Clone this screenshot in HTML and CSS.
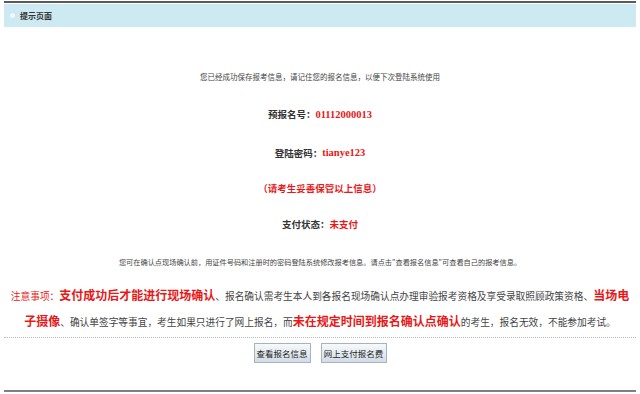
FILE: index.html
```html
<!DOCTYPE html>
<html lang="zh-CN">
<head>
<meta charset="utf-8">
<title>提示页面</title>
<link rel="stylesheet" href="styles.css">
</head>
<body>
<div class="page">
  <div class="topline"></div>
  <div class="header">
    <span class="dot"></span>
    <span class="title">提示页面</span>
  </div>
  <div class="content">
    <div class="row small r1">您已经成功保存报考信息，请记住您的报名信息，以便下次登陆系统使用</div>
    <div class="row big r2">预报名号：<span class="red num">01112000013</span></div>
    <div class="row big r3">登陆密码：<span class="red num">tianye123</span></div>
    <div class="row big red r4">（请考生妥善保管以上信息）</div>
    <div class="row big r5">支付状态：<span class="red">未支付</span></div>
    <div class="row small r6">您可在确认点现场确认前，用证件号码和注册时的密码登陆系统修改报考信息。请点击"查看报名信息"可查看自己的报考信息。</div>
    <div class="notice"><span class="rn">注意事项：</span><b class="rb">支付成功后才能进行现场确认</b>、报名确认需考生本人到各报名现场确认点办理审验报考资格及享受录取照顾政策资格、<b class="rb">当场电</b><br><b class="rb">子摄像</b>、确认单签字等事宜，考生如果只进行了网上报名，而<b class="rb">未在规定时间到报名确认点确认</b>的考生，报名无效，不能参加考试。</div>
    <div class="divider"></div>
    <div class="buttons">
      <button class="btn b1">查看报名信息</button>
      <button class="btn b2">网上支付报名费</button>
    </div>
  </div>
  <div class="bottomline"></div>
</div>
</body>
</html>
```
FILE: styles.css
```css
html, body {
  margin: 0;
  padding: 0;
  background: #ffffff;
}
body {
  font-family: "Noto Sans CJK SC", "Liberation Sans", sans-serif;
  color: #444444;
}
.page {
  margin: 0 4px;
  padding-top: 1px;
}
.topline {
  height: 2px;
  background: #5a5a5a;
}
.header {
  margin-top: 1px;
  height: 23px;
  background: #cdeaf2;
  display: flex;
  align-items: center;
}
.dot {
  width: 5px;
  height: 5px;
  border-radius: 50%;
  background: #eef8fb;
  margin-left: 6px;
}
.title {
  margin-left: 5px;
  font-size: 8px;
  font-weight: bold;
  color: #333333;
}
.content {
  padding-top: 30px;
}
.row {
  text-align: center;
  display: flex;
  align-items: center;
  justify-content: center;
}
.small {
  font-size: 7.5px;
  color: #444444;
}
.big {
  font-size: 9.5px;
  font-weight: bold;
  color: #333333;
}
.red {
  color: #e81818;
}
.num {
  font-family: "Liberation Serif", serif;
  font-size: 10.5px;
}
.r1 { height: 38px; }
.r2 { height: 38px; }
.r3 { height: 39px; }
.r4 { height: 31px; }
.r5 { height: 41px; }
.r6 { height: 36px; font-size: 7.2px; }
.notice {
  margin-top: 3px;
  text-align: center;
  font-size: 9.7px;
  line-height: 26px;
  white-space: nowrap;
  color: #444444;
}
.rn {
  color: #e81818;
}
.rb {
  color: #e81818;
  font-size: 12px;
  line-height: 1;
}
.divider {
  margin-top: 2px;
  border-top: 1px dotted #b8b8b8;
}
.buttons {
  margin-top: 5px;
  display: flex;
  justify-content: center;
  gap: 10px;
  height: 20px;
}
.btn {
  height: 20px;
  padding: 0;
  font-family: "Noto Sans CJK SC", sans-serif;
  font-size: 8.5px;
  color: #222222;
  border: 1px solid #a7b3c0;
  background: linear-gradient(#f7f9fb, #d2dce6);
}
.b1 { width: 57px; }
.b2 { width: 66px; }
.bottomline {
  margin-top: 27px;
  height: 2px;
  background: #808080;
}
```
